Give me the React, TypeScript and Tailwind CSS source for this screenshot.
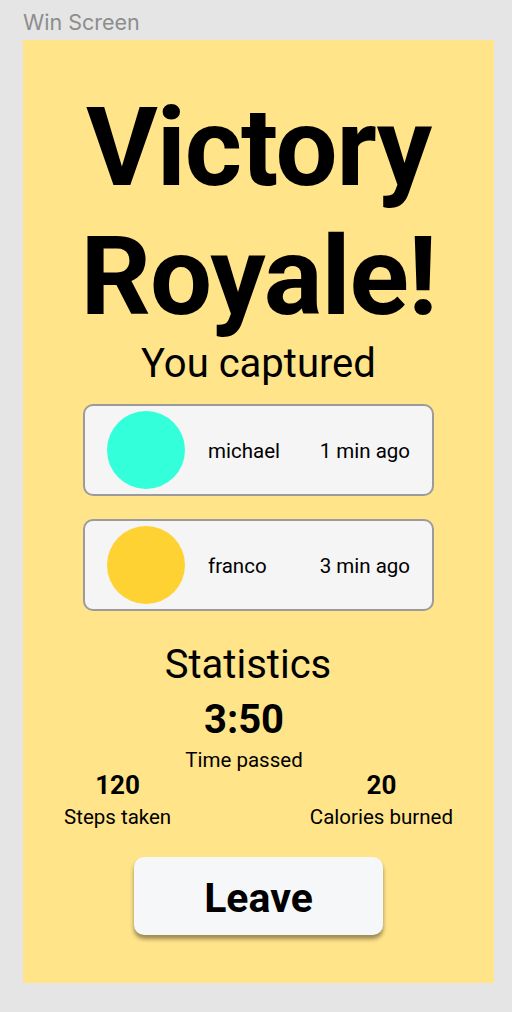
import React from "react";

interface Capture {
    name: string;
    ago: string;
    color: string;
}

const captures: Capture[] = [
    { name: "michael", ago: "1 min ago", color: "bg-[#33ffda]" },
    { name: "franco", ago: "3 min ago", color: "bg-[#ffd233]" },
];

const CaptureCard: React.FC<{ capture: Capture; first?: boolean }> = ({ capture, first }) => (
    <div
        className={`mx-auto flex h-[92px] w-[351px] items-center rounded-[10px] border-2 border-[#9b9b9b] bg-[#f5f5f5] px-[22px] ${first ? "mt-[17px]" : "mt-[23px]"}`}
    >
        <div className={`h-[78px] w-[78px] shrink-0 rounded-full ${capture.color}`} />
        <span className="ml-[23px] pt-[2px] text-[20.5px] leading-[24px]">{capture.name}</span>
        <span className="ml-auto pt-[2px] text-[20.5px] leading-[24px]">{capture.ago}</span>
    </div>
);

const App: React.FC = () => {
    return (
        <main className="h-[1012px] w-full bg-[#e5e5e5] px-[23px] font-['Roboto',sans-serif] text-black">
            <div className="pt-[10px] font-['Inter',sans-serif] text-[21.5px] leading-[25px] text-[#8d8d8d]">Win Screen</div>
            <section className="mt-[5px] flex h-[943px] w-[471px] flex-col bg-[#ffe48a] pt-[43px]">
                <h1 className="text-center text-[110px] font-bold leading-[129px] tracking-[-0.01em]">
                    Victory
                    <br />
                    Royale!
                </h1>
                <p className="text-center text-[40px] leading-[46px]">You captured</p>

                {captures.map((c, i) => (
                    <CaptureCard key={c.name} capture={c} first={i === 0} />
                ))}

                <h2 className="mt-[31px] pr-[21px] text-center text-[40px] leading-[46px]">Statistics</h2>
                <div className="mt-[9px] pr-[29px] text-center text-[40px] font-bold leading-[46px]">3:50</div>
                <div className="mt-[5px] pr-[29px] text-center text-[20.5px] leading-[24px]">Time passed</div>

                <div className="mx-auto -mt-[2px] flex w-[389px] justify-between">
                    <div className="flex flex-col items-center">
                        <span className="text-[26px] font-bold leading-[30px]">120</span>
                        <span className="mt-[5px] text-[20.5px] leading-[24px]">Steps taken</span>
                    </div>
                    <div className="flex flex-col items-center">
                        <span className="text-[26px] font-bold leading-[30px]">20</span>
                        <span className="mt-[5px] text-[20.5px] leading-[24px]">Calories burned</span>
                    </div>
                </div>

                <button className="mx-auto mt-[28px] flex h-[78px] w-[249px] items-center justify-center rounded-[10px] bg-[#f6f7f9] pt-[3px] text-[41px] font-bold leading-[48px] shadow-[0_4px_4px_rgba(0,0,0,0.4)]">
                    Leave
                </button>
            </section>
        </main>
    );
};

export default App;
